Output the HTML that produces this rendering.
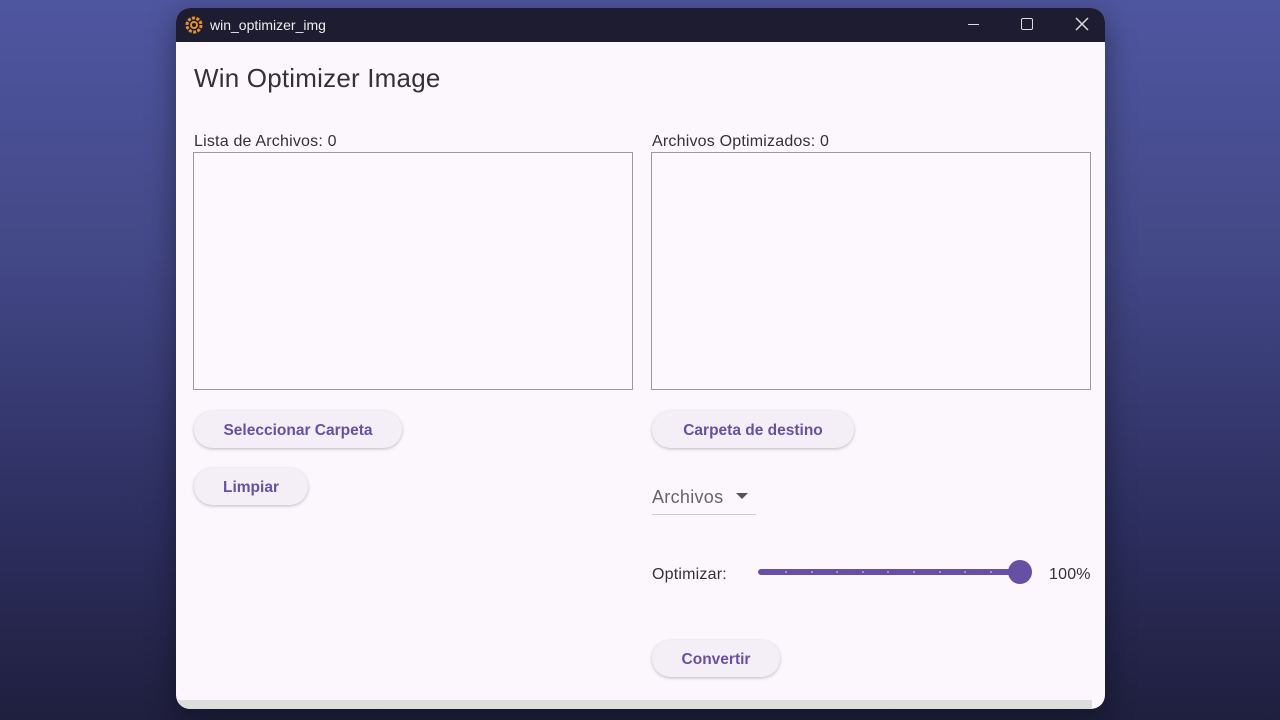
<!DOCTYPE html>
<html><head><meta charset="utf-8"><style>
*{margin:0;padding:0;box-sizing:border-box}
body{width:1280px;height:720px;overflow:hidden;position:relative;font-family:"Liberation Sans",sans-serif;
background:linear-gradient(180deg,#4f56a0 0%,#434887 35%,#2e3062 70%,#1f1f3e 100%)}
.win{position:absolute;left:176px;top:8px;width:929px;height:701px;border-radius:14px;overflow:hidden;background:#fcf7fd;box-shadow:0 8px 30px rgba(0,0,0,.4)}
.tb{height:34px;background:#1d1c30;color:#eee;font-size:14px;position:relative}
.tb .t{position:absolute;left:34px;top:9px}
.abs{position:absolute}
.lbl{font-size:16px;color:#333;letter-spacing:.2px}
.box{position:absolute;border:1px solid #9a9a9a;background:#fdf8fd}
.btn{position:absolute;height:37px;border-radius:19px;background:#f4eff6;box-shadow:0 1px 3px rgba(0,0,0,.25);color:#6750a4;font-weight:bold;font-size:15.5px;text-align:center;line-height:39px}
</style></head><body>
<div class="win">
<div class="tb">
<svg class="abs" style="left:9px;top:8px" width="18" height="18" viewBox="0 0 18 18"><circle cx="9" cy="9" r="7" fill="none" stroke="#e8902a" stroke-width="3" stroke-dasharray="3 1.4"/><circle cx="9" cy="9" r="3" fill="none" stroke="#e8902a" stroke-width="2"/></svg>
<span class="t">win_optimizer_img</span>
<div class="abs" style="left:792px;top:16px;width:11px;height:1px;background:#ddd"></div>
<div class="abs" style="left:845px;top:10px;width:12px;height:12px;border:1.5px solid #ddd;border-radius:2px"></div>
<svg class="abs" style="left:899px;top:9px" width="14" height="14"><path d="M1 1L13 13M13 1L1 13" stroke="#ddd" stroke-width="1.5"/></svg>
</div>
<div class="abs" style="left:18px;top:55px;font-size:26px;color:#333;letter-spacing:.2px">Win Optimizer Image</div>
<div class="abs lbl" style="left:18px;top:125px">Lista de Archivos: 0</div>
<div class="abs lbl" style="left:476px;top:125px">Archivos Optimizados: 0</div>
<div class="box" style="left:17px;top:144px;width:440px;height:238px"></div>
<div class="box" style="left:475px;top:144px;width:440px;height:238px"></div>
<div class="btn" style="left:18px;top:403px;width:208px">Seleccionar Carpeta</div>
<div class="btn" style="left:476px;top:403px;width:202px">Carpeta de destino</div>
<div class="btn" style="left:18px;top:460px;width:114px">Limpiar</div>
<div class="abs" style="left:476px;top:479px;font-size:18px;color:#666;letter-spacing:.3px">Archivos</div>
<svg class="abs" style="left:560px;top:485px" width="12" height="7"><path d="M0 0H12L6 6Z" fill="#555"/></svg>
<div class="abs" style="left:476px;top:506px;width:104px;height:1px;background:#ccc"></div>
<div class="abs lbl" style="left:476px;top:558px">Optimizar:</div>
<div class="abs" style="left:582px;top:561px;width:260px;height:6px;border-radius:3px;background:#6750a4"></div>
<svg class="abs" style="left:582px;top:561px" width="260" height="6"><g fill="#b8a8d8"><circle cx="28" cy="3" r="1"/><circle cx="54" cy="3" r="1"/><circle cx="79" cy="3" r="1"/><circle cx="105" cy="3" r="1"/><circle cx="130" cy="3" r="1"/><circle cx="156" cy="3" r="1"/><circle cx="182" cy="3" r="1"/><circle cx="207" cy="3" r="1"/><circle cx="233" cy="3" r="1"/></g></svg>
<div class="abs" style="left:832px;top:552px;width:24px;height:24px;border-radius:50%;background:#6750a4"></div>
<div class="abs lbl" style="left:873px;top:558px">100%</div>
<div class="btn" style="left:476px;top:632px;width:128px">Convertir</div>
<div class="abs" style="left:0;top:692px;width:916px;height:9px;background:#ddd"></div>
</div>
</body></html>
